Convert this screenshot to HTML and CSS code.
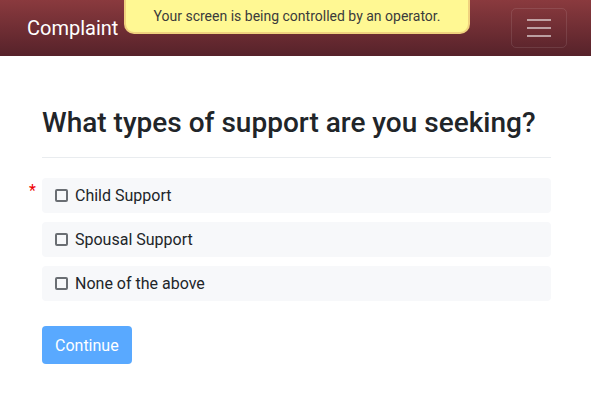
FILE: index.html
```html
<!DOCTYPE html>
<html>
<head>
<meta charset="utf-8">
<link rel="stylesheet" href="styles.css">
</head>
<body>
<nav class="navbar">
  <span class="brand">Complaint</span>
  <button class="toggler" aria-label="menu">
    <svg width="30" height="30" viewBox="0 0 30 30"><path d="M3 7h24M3 15h24M3 23h24" stroke="rgba(255,255,255,0.55)" stroke-width="2"/></svg>
  </button>
  <div class="notice">Your screen is being controlled by an operator.</div>
</nav>
<main class="content">
  <h1 class="title">What types of support are you seeking?</h1>
  <hr class="rule">
  <div class="field">
    <span class="required">*</span>
    <div class="options">
      <label class="option"><span class="box"></span>Child Support</label>
      <label class="option"><span class="box"></span>Spousal Support</label>
      <label class="option"><span class="box"></span>None of the above</label>
    </div>
  </div>
  <button class="continue">Continue</button>
</main>
</body>
</html>
```
FILE: styles.css
```css
* { box-sizing: border-box; }
body {
  margin: 0;
  font-family: Roboto, "Liberation Sans", sans-serif;
  color: #212529;
  background: #fff;
}
.navbar {
  position: relative;
  height: 56px;
  display: flex;
  align-items: center;
  justify-content: space-between;
  padding: 0 24px 0 27px;
  background: linear-gradient(to bottom, #8a3a3e, #56222a);
}
.brand {
  color: #fff;
  font-size: 20px;
  line-height: 30px;
}
.toggler {
  width: 56px;
  height: 40px;
  border: 1px solid rgba(255,255,255,0.1);
  border-radius: 5px;
  background: transparent;
  display: flex;
  align-items: center;
  justify-content: center;
  padding: 0;
  margin-top: -1px;
}
.notice {
  position: absolute;
  left: 124px;
  top: -10px;
  width: 346px;
  height: 44px;
  padding-top: 16px;
  background: #fff893;
  border: 2px solid #f0d27e;
  border-top: none;
  border-radius: 0 0 10px 10px;
  text-align: center;
  font-size: 14px;
  line-height: 20px;
  color: #3b3b3b;
}
.content {
  padding: 0 40px 0 42px;
}
.title {
  margin: 50px 0 0;
  font-size: 28px;
  font-weight: 500;
  line-height: 34px;
  white-space: nowrap;
}
.rule {
  margin: 17px 0 20px;
  border: 0;
  border-top: 1px solid #e9ecef;
}
.field { position: relative; }
.required {
  position: absolute;
  left: -13px;
  top: 1px;
  color: #e00;
  font-size: 16px;
  line-height: 24px;
}
.options {
  display: flex;
  flex-direction: column;
  gap: 9px;
}
.option {
  height: 35px;
  display: flex;
  align-items: center;
  background: #f7f8fa;
  border-radius: 4px;
  padding-left: 13px;
  font-size: 16px;
  color: #212529;
}
.box {
  width: 13px;
  height: 13px;
  border: 2px solid #6a6e73;
  border-radius: 2px;
  margin-right: 7px;
}
.continue {
  margin-top: 25px;
  height: 38px;
  padding: 0 13px;
  border: none;
  border-radius: 4px;
  background: #59a9ff;
  color: #fff;
  font-family: Roboto, "Liberation Sans", sans-serif;
  font-size: 16px;
}
```
